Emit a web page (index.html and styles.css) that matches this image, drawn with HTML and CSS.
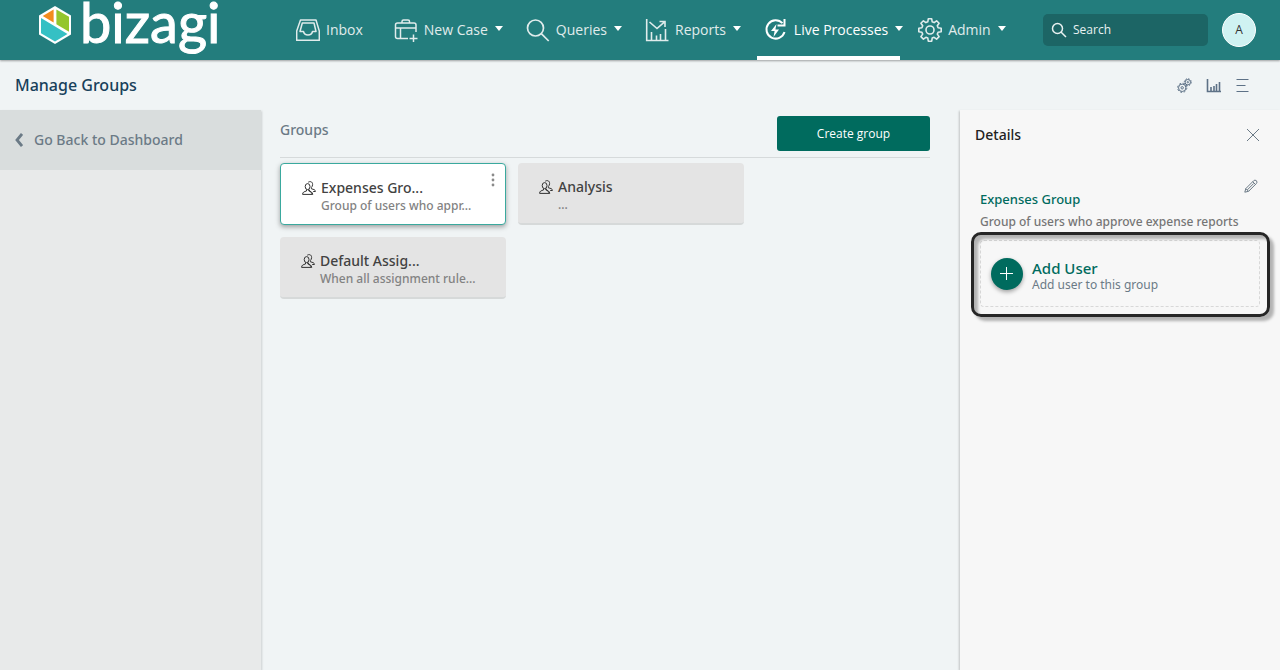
FILE: index.html
```html
<!DOCTYPE html>
<html lang="en">
<head>
<meta charset="utf-8">
<meta name="viewport" content="width=device-width, initial-scale=1">
<title>Manage Groups</title>
<link rel="stylesheet" href="styles.css">
</head>
<body>
<svg class="defs" aria-hidden="true">
  <symbol id="people" viewBox="0 0 14 14">
    <g fill="none" stroke="currentColor" stroke-width="1">
      <ellipse cx="5.6" cy="5.6" rx="2.4" ry="3"/>
      <path d="M.6 13.4c0-2.400 1.600-2.700 3.900-3.400v-1.500M6.800 8.500V10c2.200.7 3.800 1 3.800 3.400zM.6 13.400h10"/>
      <path d="M6.200 1.300C7.500.1 10.700.3 10.600 3.500c0 1.400-.6 2.300-1.200 2.900v1.400c2.400.7 4 .8 4 2.700h-2.200"/>
    </g>
  </symbol>
</svg>
<header class="topbar">
  <a class="brand" href="#" aria-label="bizagi">
    <svg class="brand-mark" viewBox="0 0 32 38" aria-hidden="true">
      <path fill="#fff" d="M16 0l16 9.500v19L16 38 0 28.500v-19z"/>
      <path fill="#f28c1e" d="M14.600 3.400v13L3.700 9.900z"/>
      <path fill="#94c62e" d="M17.400 3.400l12.600 7.400v15L17.400 18.200z"/>
      <path fill="#35c0c4" d="M2 12l26.500 16L16 35.500 2 27.300z"/>
    </svg>
    <span class="brand-name">bizagi</span>
  </a>
  <nav class="menu" aria-label="Main">
    <button class="menu-item inbox" type="button">
      <svg class="menu-icon" viewBox="0 0 24 24" aria-hidden="true"><g fill="none" stroke="currentColor" stroke-width="1.500" stroke-linejoin="round"><path d="M4.500 2h15.500L23.300 13v9.300H.7V13z"/><path d="M4 13.500h3.500c.4 2 1.700 3.500 4.500 3.500s4.100-1.500 4.500-3.500H20L18 5H6.300z"/></g></svg>
      Inbox
    </button>
    <button class="menu-item" type="button">
      <svg class="menu-icon" viewBox="0 0 24 24" aria-hidden="true"><g fill="none" stroke="currentColor" stroke-width="1.500"><path d="M14 20.500H3.500q-2 0-2-2V7q0-2 2-2H20q2 0 2 2v7M1.500 10H22M6.500 10v10.500M8 5V3.500Q8 2 9.500 2h4.500q1.500 0 1.500 1.500V5M19.500 16.500v7.500M15.500 20.500h8"/></g></svg>
      New Case<span class="caret"></span>
    </button>
    <button class="menu-item" type="button">
      <svg class="menu-icon" viewBox="0 0 24 24" aria-hidden="true"><g fill="none" stroke="currentColor" stroke-width="1.700"><circle cx="9.500" cy="10" r="8"/><path d="M15.300 15.700L22.700 23"/></g></svg>
      Queries<span class="caret"></span>
    </button>
    <button class="menu-item" type="button">
      <svg class="menu-icon" viewBox="0 0 24 24" aria-hidden="true"><g fill="none" stroke="currentColor" stroke-width="1.600"><path d="M1.700 1v21.500H23.500M6.500 22v-8M11.500 22v-4.500M15.500 22v-6M20.500 22V11"/><path d="M4.500 4l7.500 6.500L19 4.300M14.500 3.500H20v5.500"/></g></svg>
      Reports<span class="caret"></span>
    </button>
    <button class="menu-item active" type="button">
      <svg class="menu-icon" viewBox="0 0 24 24" aria-hidden="true"><g fill="none" stroke="currentColor" stroke-width="2"><path d="M18.500 5.200A9.200 9.200 0 1 0 20.500 14"/><path d="M20.500 1v6.500h-7"/></g><path fill="currentColor" d="M12.500 6L7 13h3.600L9.500 19 15 11.500h-3.600z"/></svg>
      Live Processes<span class="caret"></span>
    </button>
    <button class="menu-item" type="button">
      <svg class="menu-icon" viewBox="0 0 24 24" aria-hidden="true"><g fill="none" stroke="currentColor" stroke-width="1.600" stroke-linejoin="round"><circle cx="12" cy="12" r="4"/><path d="M10.300.8h3.400l.5 3 1.900.8 2.500-1.800 2.500 2.500-1.800 2.500.8 1.900 3.100.5v3.500l-3.100.5-.8 1.900 1.800 2.500-2.500 2.500-2.500-1.800-1.900.8-.5 3.100h-3.400l-.5-3.100-1.900-.8-2.500 1.800-2.500-2.500 1.800-2.500-.8-1.900-3.100-.5v-3.500l3.100-.5.800-1.900-1.800-2.500 2.500-2.500 2.500 1.800 1.900-.8z"/></g></svg>
      Admin<span class="caret"></span>
    </button>
  </nav>
  <label class="search">
    <svg class="search-icon" viewBox="0 0 16 16" aria-hidden="true"><g fill="none" stroke="currentColor" stroke-width="1.500"><circle cx="6.500" cy="6.500" r="5"/><path d="M10 10l5 5"/></g></svg>
    <input type="text" placeholder="Search" aria-label="Search">
  </label>
  <button class="avatar" type="button">A</button>
</header>

<div class="titlebar">
  <h1>Manage Groups</h1>
  <div class="tools">
    <button type="button" aria-label="Settings"><svg viewBox="0 0 15 15" aria-hidden="true"><g fill="none" stroke="currentColor"><circle cx="5.200" cy="9.800" r="3.700"/><circle cx="5.200" cy="9.800" r="4.600" stroke-dasharray="1.800 1.810"/><circle cx="5.200" cy="9.800" r="1.200"/><circle cx="10.800" cy="4.200" r="2.700"/><circle cx="10.800" cy="4.200" r="3.500" stroke-dasharray="1.400 1.350"/><circle cx="10.800" cy="4.200" r=".7"/></g></svg></button>
    <button type="button" aria-label="Charts"><svg viewBox="0 0 15 15" aria-hidden="true"><path fill="none" stroke="currentColor" stroke-width="1.600" d="M1.500 1v12.500H15M5 13V9M8 13V8M10.500 13V6M13.500 13V4"/></svg></button>
    <button type="button" aria-label="Menu"><svg viewBox="0 0 15 15" aria-hidden="true"><path fill="none" stroke="currentColor" d="M1.500 1.500h12M1.500 7.500h9M1.500 13.500h12"/></svg></button>
  </div>
</div>

<div class="workspace">
  <aside class="sidebar">
    <a class="back" href="#">
      <svg viewBox="0 0 8 14" aria-hidden="true"><path fill="none" stroke="currentColor" stroke-width="2.800" d="M7 1L2 7l5 6"/></svg>
      Go Back to Dashboard
    </a>
  </aside>
  <main class="groups">
    <div class="groups-head">
      <h2>Groups</h2>
      <button class="create" type="button">Create group</button>
    </div>
    <div class="cards">
      <article class="card selected">
        <svg class="card-icon" aria-hidden="true"><use href="#people"/></svg>
        <div class="card-text"><h3>Expenses Gro...</h3><p>Group of users who appr...</p></div>
        <button class="more" type="button" aria-label="More options"><svg viewBox="0 0 4 14" aria-hidden="true"><g fill="currentColor"><circle cx="2" cy="2" r="1.400"/><circle cx="2" cy="7" r="1.400"/><circle cx="2" cy="12" r="1.400"/></g></svg></button>
      </article>
      <article class="card">
        <svg class="card-icon" aria-hidden="true"><use href="#people"/></svg>
        <div class="card-text"><h3>Analysis</h3><p>...</p></div>
      </article>
      <article class="card">
        <svg class="card-icon" aria-hidden="true"><use href="#people"/></svg>
        <div class="card-text"><h3>Default Assig...</h3><p>When all assignment rule...</p></div>
      </article>
    </div>
  </main>
  <aside class="details">
    <div class="details-head">
      <h2>Details</h2>
      <button class="icon-button" type="button" aria-label="Close"><svg viewBox="0 0 14 14" aria-hidden="true"><path fill="none" stroke="currentColor" d="M1 1l12 12M13 1L1 13"/></svg></button>
    </div>
    <div class="details-body">
      <button class="icon-button edit" type="button" aria-label="Edit"><svg viewBox="0 0 14 14" aria-hidden="true"><path fill="none" stroke="currentColor" d="M.8 13.200l1-3.600 7.700-7.700q1.400-1.500 2.900-.2 1.300 1.500-.1 2.900l-7.700 7.700zM1.800 9.600l2.700 2.700M8.700 2.700l2.700 2.700M3.300 10.900l6.500-6.500"/></svg></button>
      <h3>Expenses Group</h3>
      <p>Group of users who approve expense reports</p>
      <div class="add-area">
        <button class="add-user" type="button">
          <span class="plus"><svg viewBox="0 0 14 14" aria-hidden="true"><path fill="none" stroke="currentColor" d="M6.500 0v13M0 6.500h13"/></svg></span>
          <span class="add-text"><strong>Add User</strong><small>Add user to this group</small></span>
        </button>
        <span class="highlight"></span>
      </div>
    </div>
  </aside>
</div>
</body>
</html>
```
FILE: styles.css
```css
* { box-sizing: border-box; }
body {
  margin: 0;
  min-height: 100vh;
  display: flex;
  flex-direction: column;
  background: #f0f4f5;
  color: #424242;
  font: 14px/18px "Noto Sans", sans-serif;
}
h1, h2, h3, p { margin: 0; font-weight: 500; }
button {
  border: 0;
  padding: 0;
  background: none;
  color: inherit;
  font: inherit;
  cursor: pointer;
}
a { color: inherit; text-decoration: none; }
svg { display: block; flex: none; }
.defs { position: absolute; width: 0; height: 0; }

.topbar {
  position: relative;
  display: flex;
  align-items: center;
  height: 60px;
  padding: 0 24px 0 38px;
  background: #237d7d;
  box-shadow: 0 1px 2px rgba(0, 0, 0, .35);
  font-family: "Open Sans", sans-serif;
}
.brand {
  display: flex;
  align-items: flex-start;
  gap: 8px;
  width: 258px;
  height: 60px;
  padding-top: 6px;
  color: #fff;
}
.brand-mark { width: 34px; height: 38px; }
.brand-name {
  font: 56px/32px Lato, sans-serif;
  -webkit-text-stroke: 1px #fff;
}
.menu { display: flex; gap: 23px; height: 60px; color: #e0ecec; }
.menu-item {
  position: relative;
  display: flex;
  align-items: center;
  gap: 6px;
  white-space: nowrap;
}
.menu-item.inbox { margin-right: 8px; }
.menu-item.active { margin-right: -8px; color: #fff; }
.menu-item.active::after {
  content: "";
  position: absolute;
  left: -7px;
  right: 3px;
  bottom: 0;
  height: 4px;
  background: #fff;
}
.menu-icon { width: 24px; height: 24px; }
.caret {
  margin-left: 1px;
  margin-bottom: 3px;
  border: 4px solid transparent;
  border-top: 5px solid #fff;
  border-bottom: 0;
}
.search {
  display: flex;
  align-items: center;
  gap: 6px;
  width: 165px;
  height: 32px;
  margin-left: auto;
  padding: 0 8px;
  border-radius: 5px;
  background: #1c6565;
  color: #e8f1f1;
}
.search-icon { width: 16px; height: 16px; }
.search input {
  flex: 1;
  min-width: 0;
  padding: 0;
  border: 0;
  outline: 0;
  background: none;
  color: inherit;
  font: 12px/18px "Open Sans", sans-serif;
}
.search input::placeholder { color: #e8f1f1; opacity: 1; }
.avatar {
  width: 34px;
  height: 34px;
  margin-left: 14px;
  border: 1px solid #fff;
  border-radius: 50%;
  background: #cff2f2;
  color: #333;
  font-size: 12px;
}

.titlebar {
  display: flex;
  align-items: center;
  justify-content: space-between;
  height: 50px;
  padding: 0 30px 0 15px;
}
.titlebar h1 { color: #17405a; font-size: 16px; line-height: 24px; }
.tools { display: flex; gap: 14px; color: #5d7186; }
.tools svg { width: 15px; height: 15px; }

.workspace { display: flex; flex: 1; }
.sidebar {
  width: 261px;
  background: #e8eaea;
  box-shadow: 1px 1px 2px rgba(0, 0, 0, .15);
}
.back {
  display: flex;
  align-items: center;
  gap: 11px;
  height: 60px;
  padding-left: 15px;
  background: #d9dddd;
  color: #6b7a86;
  font-weight: 500;
}
.back svg { width: 8px; height: 14px; }

.groups { flex: 1; padding: 6px 30px 0 19px; }
.groups-head {
  display: flex;
  align-items: flex-start;
  justify-content: space-between;
  height: 42px;
  border-bottom: 1px solid #d6dadb;
}
.groups-head h2 { padding-top: 5px; color: #6b7a86; font-size: 14px; }
.create {
  width: 153px;
  height: 35px;
  border-radius: 3px;
  background: #006b5e;
  color: #fff;
  font: 12px/18px "Open Sans", sans-serif;
}
.cards {
  display: grid;
  grid-template-columns: repeat(auto-fill, 226px);
  gap: 12px;
  padding-top: 5px;
}
.card {
  position: relative;
  display: flex;
  gap: 5px;
  padding: 14px 21px 10px;
  border-bottom: 2px solid #d6d9d9;
  border-radius: 4px;
  background: #e4e4e4;
}
.card.selected {
  border: 1px solid #3aa99e;
  background: #fff;
  box-shadow: 0 2px 5px rgba(0, 0, 0, .35);
}
.card-icon { width: 14px; height: 14px; margin-top: 3px; color: #333; }
.card h3 { font-size: 14px; line-height: 20px; }
.card p { color: #828282; font-size: 12px; line-height: 16px; white-space: nowrap; }
.more { position: absolute; top: 9px; right: 10px; color: #8a8a8a; }
.more svg { width: 4px; height: 14px; }

.details {
  width: 320px;
  background: #f7f7f7;
  box-shadow: -1px 1px 2px rgba(0, 0, 0, .2);
}
.details-head {
  display: flex;
  align-items: center;
  justify-content: space-between;
  height: 50px;
  padding: 0 20px 0 15px;
}
.details-head h2 { color: #222; font-size: 14px; }
.icon-button svg { width: 14px; height: 14px; color: #6b7a86; }
.details-body { display: flex; flex-direction: column; padding: 19px 20px 0; }
.edit { align-self: flex-end; margin-right: 2px; }
.details-body h3 { color: #006b5e; font-size: 13px; line-height: 18px; margin-top: -3px; }
.details-body p { margin-top: 5px; color: #757575; font-size: 12px; white-space: nowrap; }
.add-area { position: relative; margin-top: 9px; }
.add-user {
  display: flex;
  align-items: center;
  gap: 9px;
  width: 100%;
  height: 67px;
  padding-left: 10px;
  border: 1px dashed #d8d8d8;
  border-radius: 4px;
  text-align: left;
}
.plus {
  display: grid;
  place-items: center;
  width: 32px;
  height: 32px;
  border-radius: 50%;
  background: #006b5e;
  color: #fff;
  box-shadow: 0 2px 4px rgba(0, 0, 0, .35);
}
.plus svg { width: 14px; height: 14px; }
.add-text { display: flex; flex-direction: column; padding-top: 4px; }
.add-text strong { color: #006b5e; font-size: 15px; font-weight: 500; line-height: 18px; }
.add-text small { color: #6b7a86; font-size: 12px; line-height: 16px; }
.highlight {
  position: absolute;
  inset: -8px -10px -10px -9px;
  border: 3px solid #262626;
  border-radius: 10px;
  box-shadow: 4px 4px 3px rgba(0, 0, 0, .28), inset 4px 4px 3px rgba(0, 0, 0, .28);
  pointer-events: none;
}
```
